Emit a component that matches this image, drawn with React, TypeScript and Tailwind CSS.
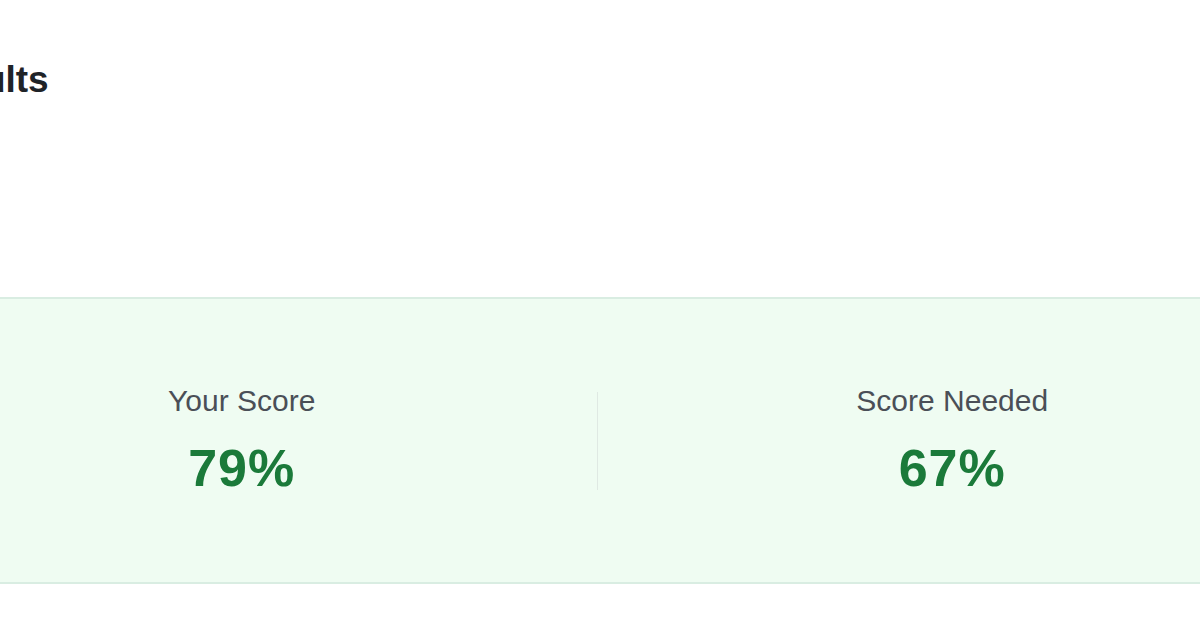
export default function App() {
  return (
    <div
      className="h-[628px] w-[1200px] overflow-hidden bg-white"
      style={{ fontFamily: '"Liberation Sans", Arial, sans-serif' }}
    >
      <h1 className="ml-[-85px] pt-[58px] text-[37px] font-bold leading-[44px] text-[#1f2328]">Results</h1>

      <div className="ml-[-113px] mt-[195px] flex h-[287px] w-[1420px] items-center border-y-2 border-[#d9ede2] bg-[#effcf2]">
        <div className="flex flex-1 flex-col items-center">
          <div className="text-[30px] leading-[34px] text-[#4a4f57]">Your Score</div>
          <div className="mt-[20px] text-[52px] font-bold leading-[60px] tracking-[1px] text-[#1b7a3a]">79%</div>
        </div>
        <div className="h-[98px] w-px bg-[#dfe9e3]" />
        <div className="flex flex-1 flex-col items-center">
          <div className="text-[30px] leading-[34px] text-[#4a4f57]">Score Needed</div>
          <div className="mt-[20px] text-[52px] font-bold leading-[60px] tracking-[1px] text-[#1b7a3a]">67%</div>
        </div>
      </div>
    </div>
  );
}
